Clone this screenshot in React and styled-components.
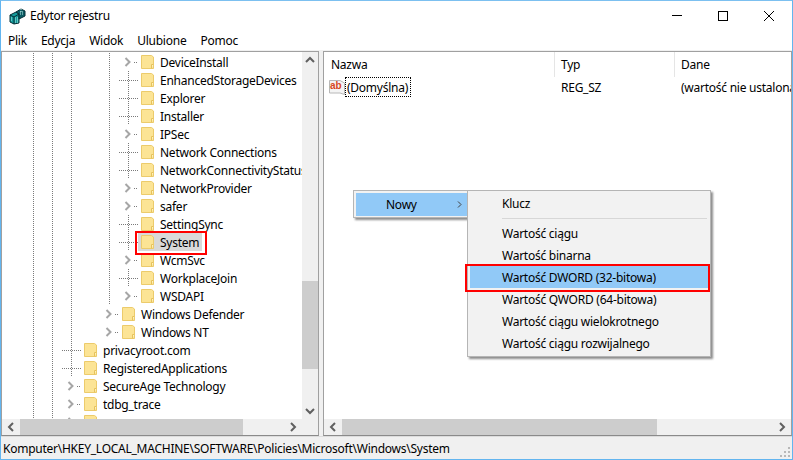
import React from 'react';
import styled, { createGlobalStyle } from 'styled-components';

const Global = createGlobalStyle`
  html, body { margin: 0; padding: 0; background: #fff; overflow: hidden; }
  #root { width: 793px; height: 460px; }
  * { box-sizing: border-box; }
`;

const Window = styled.div`
  position: relative;
  width: 793px; height: 460px;
  border: 1px solid #63b5ef; border-top-color: #7cc0f0;
  background: #fff;
  display: flex; flex-direction: column;
  font-family: "Noto Sans", "Open Sans", sans-serif;
  font-size: 12px; letter-spacing: -0.25px; color: #000;
  overflow: hidden;
`;
const TitleBar = styled.div`
  height: 30px; display: flex; align-items: center; padding-left: 8px; flex: none;
`;
const AppTitle = styled.span`margin-left: 4px; margin-bottom: 2px;`;
const Controls = styled.div`margin-left: auto; display: flex; height: 30px;`;
const CtrlBtn = styled.div`
  width: 46px; height: 30px; display: flex; align-items: center; justify-content: center;
  svg { display: block; }
`;
const MenuBar = styled.div`
  height: 19px; flex: none; display: flex; align-items: center; gap: 14px; padding-left: 7px;
`;
const Panes = styled.div`
  flex: 1; display: flex; gap: 4px; background: #f0f0f0; padding-top: 1px; min-height: 0;
`;
const Pane = styled.div`
  border: 1px solid #a0a0a0; border-bottom-color: #8a8a8a; background: #fff; overflow: hidden;
  width: ${p => p.$w}px; flex: ${p => p.$w ? 'none' : 1};
  display: grid; min-width: 0;
`;
const TreePane = styled(Pane)`
  grid-template-columns: 1fr 16px; grid-template-rows: 1fr 16px;
`;
const ListPane = styled(Pane)`
  grid-template-rows: 1fr 16px;
`;
const TreeList = styled.div`overflow: hidden; padding-top: 1px; min-width: 0; min-height: 0;`;
const Row = styled.div`
  height: 18px; display: flex; align-items: center; padding-left: 22px; white-space: nowrap;
`;
const Cell = styled.div`
  width: 19px; height: 18px; flex: none;
  ${p => p.$guide ? `background: linear-gradient(to bottom, #7a7a7a 50%, transparent 50%) 9px 0 / 1px 2px repeat-y;` : ''}
`;
const Tee = styled.div`
  width: 19px; height: 18px; flex: none;
  background:
    linear-gradient(to bottom, #7a7a7a 50%, transparent 50%) 9px 0 / 1px 2px repeat-y,
    linear-gradient(to right, #7a7a7a 50%, transparent 50%) 10px 9px / 2px 1px repeat-x;
`;
const Expander = styled.div`width: 19px; height: 18px; flex: none; svg { display: block; }`;
const Item = styled.div`
  display: flex; align-items: center; height: 18px; padding: 0 3px 0 3px; margin-left: 0;
  background: ${p => p.$selected ? '#d9d9d9' : 'transparent'};
`;
const ItemLabel = styled.span`margin-left: 6px;`;
const Corner = styled.div`background: #f0f0f0;`;
const VBar = styled.div`
  background: #f0f0f0; display: flex; flex-direction: column; align-items: center; min-height: 0;
`;
const HBar = styled.div`
  background: #f0f0f0; display: flex; align-items: stretch; height: 16px; min-width: 0;
`;
const Arrow = styled.div`
  flex: none; width: ${p => p.$v ? 16 : 18}px; height: 16px; display: flex; align-items: center; justify-content: center;
`;
const Space = styled.div`flex: ${p => p.$h ? 'none' : 1}; height: ${p => p.$h ? `${p.$h}px` : 'auto'};`;
const VThumb = styled.div`width: 16px; height: 88px; background: #cdcdcd; flex: none;`;
const HThumb = styled.div`width: ${p => p.$w}px; background: #cdcdcd; flex: none;`;
const ListBody = styled.div`overflow: hidden; min-height: 0; min-width: 0;`;
const Header = styled.div`
  height: 25px; display: grid; grid-template-columns: 231px 120px 1fr;
`;
const HeadCell = styled.div`
  display: flex; align-items: center; padding-left: 6px; color: #000;
  border-right: 1px solid #e5e5e5; white-space: nowrap;
  &:first-child { padding-left: 7px; }
  &:last-child { border-right: 0; }
`;
const ValueRow = styled.div`
  height: 20px; display: grid; grid-template-columns: 231px 120px 1fr; white-space: nowrap;
`;
const NameCell = styled.div`display: flex; align-items: center; padding-left: 5px;`;
const Focused = styled.span`
  margin-left: 0; border: 1px dotted #000; height: 20px; padding: 0 2px 0 1px; display: flex; align-items: center;
`;
const ValueCell = styled.div`display: flex; align-items: center; padding-left: 6px; overflow: hidden;`;
const StatusBar = styled.div`
  height: 23px; flex: none; background: #f0f0f0; border-top: 1px solid #dcdcdc;
  display: flex; align-items: center; padding-left: 2px; position: relative; white-space: nowrap;
`;
const Grip = styled.svg`position: absolute; right: 1px; bottom: 1px; display: block;`;
const Menu = styled.div`
  position: absolute; background: #f2f2f2; border: 1px solid #b5b5b5;
  box-shadow: 2px 2px 2px rgba(0,0,0,.45);
`;
const NewMenu = styled(Menu)`left: 352px; top: 189px; width: 115px; height: 28px; padding: 2px 0 2px 2px;`;
const NewEntry = styled.div`
  height: 23px; background: #91c9f7; display: flex; align-items: center; padding-left: 30px; width: 112px; position: relative;
  svg { position: absolute; right: 6px; top: 8px; }
`;
const SubMenu = styled(Menu)`left: 466px; top: 189px; width: 244px; padding: 1px 2px 2px;`;
const SubItem = styled.div`
  height: 22px; display: flex; align-items: center; padding-left: 32px;
  background: ${p => p.$active ? '#91c9f7' : 'transparent'};
`;
const Separator = styled.div`height: 1px; background: #d7d7d7; margin: 4px 1px 3px 32px;`;
const RedBox = styled.div`
  position: absolute; border: 2px solid #f00; pointer-events: none;
  left: ${p => p.$x}px; top: ${p => p.$y}px; width: ${p => p.$w}px; height: ${p => p.$h}px;
`;

const Chev = ({ dir, color = '#606060' }) => {
  const pts = { up: '1,6 5,2 9,6', down: '1,2 5,6 9,2', left: '6,1 2,5 6,9', right: '2,1 6,5 2,9' }[dir];
  const w = dir === 'up' || dir === 'down' ? 10 : 8, h = dir === 'up' || dir === 'down' ? 8 : 10;
  return <svg width={w} height={h} viewBox={`0 0 ${w} ${h}`}><polyline points={pts} fill="none" stroke={color} strokeWidth="2" /></svg>;
};

const SmallChev = () => (
  <svg width="5" height="7" viewBox="0 0 5 7"><polyline points="1,.5 4,3.5 1,6.5" fill="none" stroke="#404040" strokeWidth="1" /></svg>
);

const Folder = () => (
  <svg width="13" height="14" viewBox="0 0 13 14" style={{ display: 'block', flex: 'none' }}>
    <path d="M.5.5H10.5L12.5 2V13.5H.5Z" fill="#fce495" stroke="#eccb6b" />
    <path d="M10.5 13.5V9.5H12.5" fill="#fff3c4" stroke="#e6c25c" />
  </svg>
);

const ExpandIcon = () => (
  <svg width="19" height="18" viewBox="0 0 19 18">
    <polyline points="6.5,5 10.5,9 6.5,13" fill="none" stroke="#a6a6a6" strokeWidth="2" />
    <rect x="17" y="9" width="1" height="1" fill="#7a7a7a" />
    <rect x="15" y="9" width="1" height="1" fill="#7a7a7a" />
  </svg>
);

const AppIcon = () => (
  <svg width="17" height="17" viewBox="0 0 17 17" style={{ display: 'block' }}>
    <path d="M1 7L7 4L10 6V15L5 16L1 14Z" fill="#129a9a" stroke="#062e36" />
    <path d="M5 9V16M1 7L5 9L10 6" fill="none" stroke="#062e36" />
    <path d="M2 10h2M2 12h2M6 10h3M6 12h3M6 14h3" stroke="#b5f0ec" strokeDasharray="1 1" />
    <path d="M7 4L12 1L16 3V8L10 11V6Z" fill="#0b5c64" stroke="#062e36" />
    <path d="M12 1V5M11 4h4M11 6h3" stroke="#bfeeea" strokeDasharray="1 1" />
  </svg>
);

const AbIcon = () => (
  <svg width="16" height="17" viewBox="0 0 16 17" style={{ display: 'block', flex: 'none' }}>
    <path d="M.5 1.5H11L15.5 4V15.5L11 14H.5Z" fill="#f4f4f4" stroke="#b8b8b8" />
    <text x="1" y="10" fontFamily="Liberation Sans, sans-serif" fontWeight="700" fontSize="10" letterSpacing="0" fill="#d8481f">ab</text>
  </svg>
);

const D5 = [1, 1, 1, 0, 1];
const D4 = [1, 1, 1, 0];
const D2 = [1, 1];
const rows = [
  [D5, 'c', 'DeviceInstall'], [D5, 't', 'EnhancedStorageDevices'], [D5, 't', 'Explorer'], [D5, 't', 'Installer'],
  [D5, 'c', 'IPSec'], [D5, 't', 'Network Connections'], [D5, 't', 'NetworkConnectivityStatus'], [D5, 'c', 'NetworkProvider'],
  [D5, 'c', 'safer'], [D5, 't', 'SettingSync'], [D5, 't', 'System', true], [D5, 'c', 'WcmSvc'],
  [D5, 't', 'WorkplaceJoin'], [D5, 'c', 'WSDAPI'], [D4, 'c', 'Windows Defender'], [D4, 'c', 'Windows NT'],
  [D2, 't', 'privacyroot.com'], [D2, 't', 'RegisteredApplications'], [D2, 'c', 'SecureAge Technology'],
  [D2, 'c', 'tdbg_trace'], [D2, 'c', ''],
];

const newItems = ['Wartość ciągu', 'Wartość binarna', 'Wartość DWORD (32-bitowa)', 'Wartość QWORD (64-bitowa)', 'Wartość ciągu wielokrotnego', 'Wartość ciągu rozwijalnego'];

export default function App() {
  return (
    <Window>
      <Global />
      <TitleBar>
        <AppIcon />
        <AppTitle>Edytor rejestru</AppTitle>
        <Controls>
          <CtrlBtn><svg width="10" height="10"><rect y="4" width="10" height="1" fill="#000" /></svg></CtrlBtn>
          <CtrlBtn><svg width="10" height="10"><rect x=".5" y=".5" width="9" height="9" fill="none" stroke="#000" /></svg></CtrlBtn>
          <CtrlBtn><svg width="10" height="10"><path d="M0 0L10 10M10 0L0 10" stroke="#000" /></svg></CtrlBtn>
        </Controls>
      </TitleBar>
      <MenuBar>
        {['Plik', 'Edycja', 'Widok', 'Ulubione', 'Pomoc'].map(m => <span key={m}>{m}</span>)}
      </MenuBar>
      <Panes>
        <TreePane $w={318}>
          <TreeList>
            {rows.map(([g, k, label, sel], i) => (
              <Row key={i}>
                {g.map((v, j) => <Cell key={j} $guide={!!v} />)}
                {k === 't' ? <Tee /> : <Expander><ExpandIcon /></Expander>}
                <Item $selected={sel}><Folder /><ItemLabel>{label}</ItemLabel></Item>
              </Row>
            ))}
          </TreeList>
          <VBar>
            <Arrow $v><Chev dir="up" /></Arrow>
            <Space $h={213} />
            <VThumb />
            <Space />
            <Arrow $v><Chev dir="down" /></Arrow>
          </VBar>
          <HBar>
            <Arrow><Chev dir="left" /></Arrow>
            <HThumb $w={223} />
            <Space />
            <Arrow><Chev dir="right" /></Arrow>
          </HBar>
          <Corner />
        </TreePane>
        <ListPane>
          <ListBody>
            <Header>
              <HeadCell>Nazwa</HeadCell>
              <HeadCell>Typ</HeadCell>
              <HeadCell>Dane</HeadCell>
            </Header>
            <ValueRow>
              <NameCell><AbIcon /><Focused>(Domyślna)</Focused></NameCell>
              <ValueCell>REG_SZ</ValueCell>
              <ValueCell>(wartość nie ustalona)</ValueCell>
            </ValueRow>
          </ListBody>
          <HBar>
            <Arrow><Chev dir="left" /></Arrow>
            <HThumb $w={315} />
            <Space />
            <Arrow><Chev dir="right" /></Arrow>
          </HBar>
        </ListPane>
      </Panes>
      <StatusBar>
        Komputer\HKEY_LOCAL_MACHINE\SOFTWARE\Policies\Microsoft\Windows\System
        <Grip width="11" height="11" viewBox="0 0 11 11">
          {[[8, 0], [4, 4], [8, 4], [0, 8], [4, 8], [8, 8]].map(([x, y]) => <rect key={`${x}${y}`} x={x} y={y} width="2" height="2" fill="#b8b8b8" />)}
        </Grip>
      </StatusBar>
      <NewMenu>
        <NewEntry>Nowy<SmallChev /></NewEntry>
      </NewMenu>
      <SubMenu>
        <SubItem>Klucz</SubItem>
        <Separator />
        {newItems.map((t, i) => <SubItem key={t} $active={i === 2}>{t}</SubItem>)}
      </SubMenu>
      <RedBox $x={134} $y={230} $w={72} $h={24} />
      <RedBox $x={464} $y={263} $w={245} $h={28} />
    </Window>
  );
}
